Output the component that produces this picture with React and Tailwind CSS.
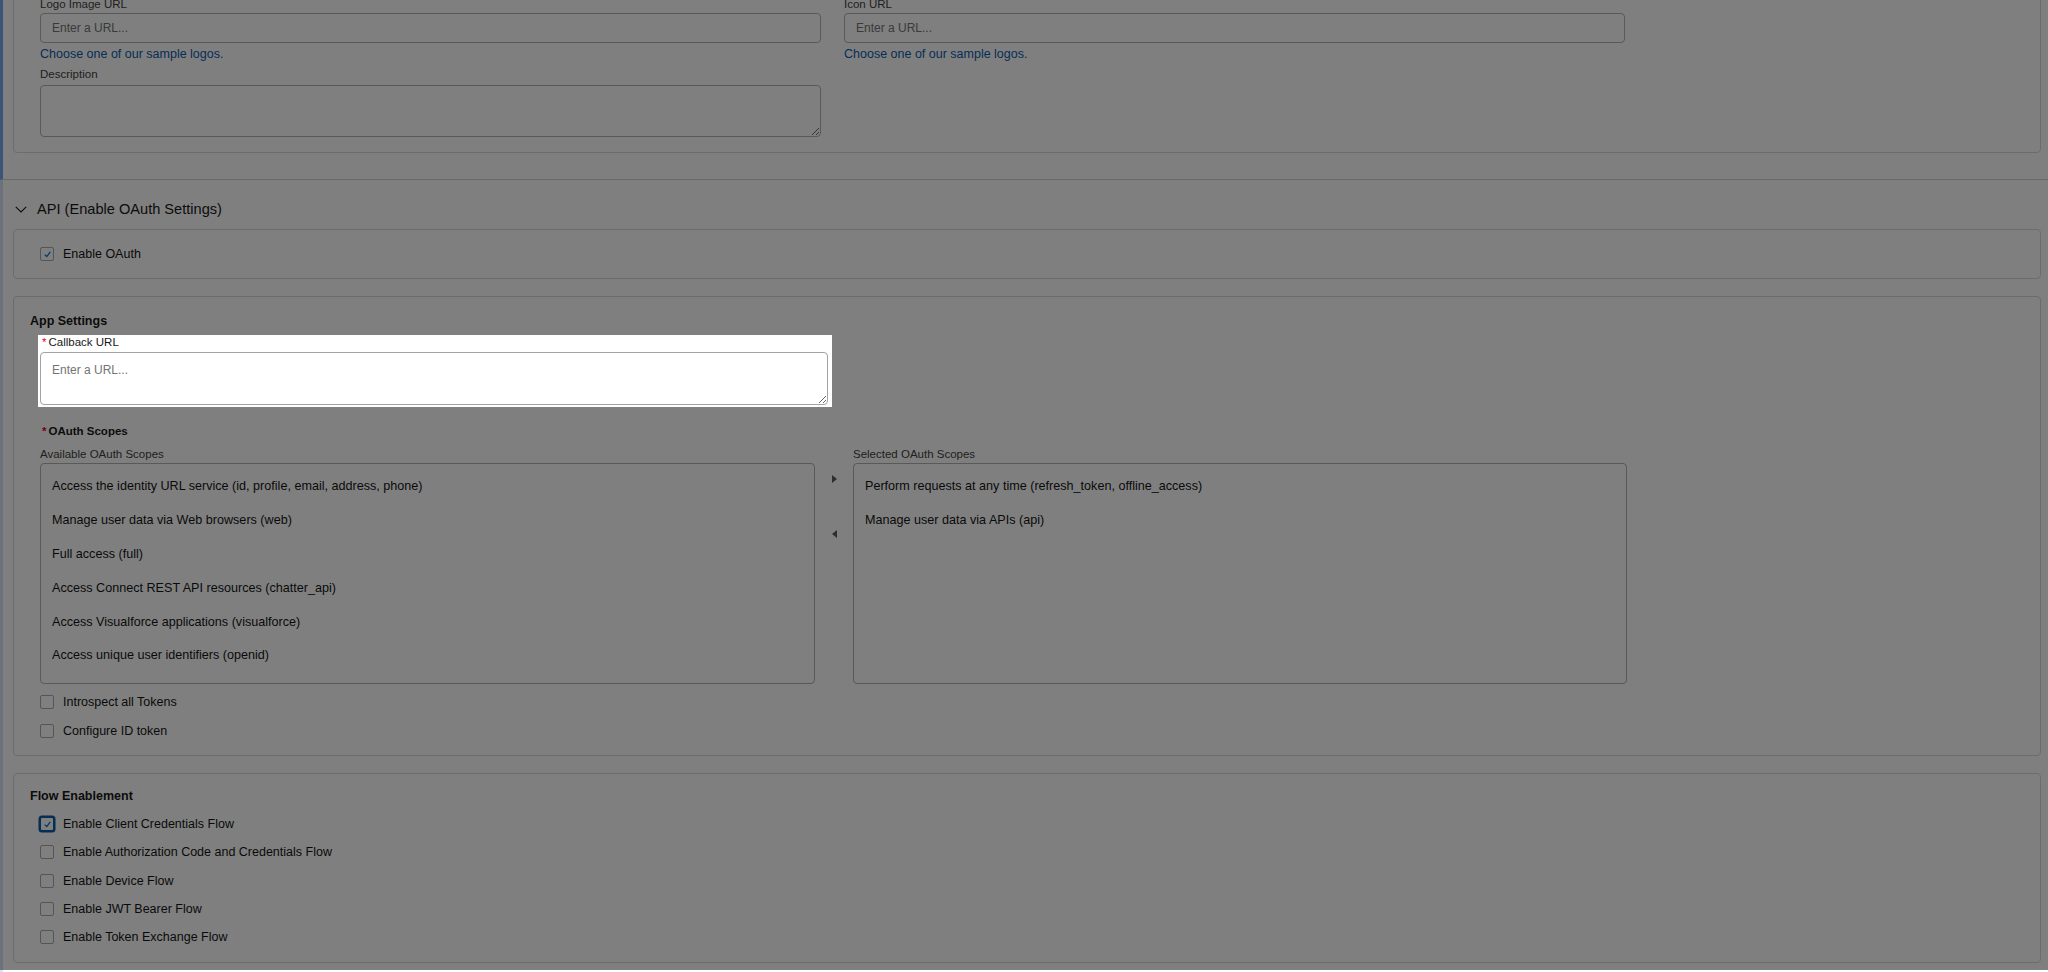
import clsx from 'clsx';

const AVAILABLE_SCOPES = [
  'Access the identity URL service (id, profile, email, address, phone)',
  'Manage user data via Web browsers (web)',
  'Full access (full)',
  'Access Connect REST API resources (chatter_api)',
  'Access Visualforce applications (visualforce)',
  'Access unique user identifiers (openid)',
];

const SELECTED_SCOPES = [
  'Perform requests at any time (refresh_token, offline_access)',
  'Manage user data via APIs (api)',
];

const FLOWS = [
  { label: 'Enable Client Credentials Flow', checked: true, focused: true },
  { label: 'Enable Authorization Code and Credentials Flow' },
  { label: 'Enable Device Flow' },
  { label: 'Enable JWT Bearer Flow' },
  { label: 'Enable Token Exchange Flow' },
];

function Checkbox({ checked, focused }) {
  return (
    <span
      className={clsx(
        'flex h-[14px] w-[14px] shrink-0 items-center justify-center rounded-[2px] border bg-white',
        focused
          ? 'border-[#0b5cab] shadow-[0_0_0_1.5px_#0b5cab]'
          : 'border-[#ababab]'
      )}
    >
      {checked && (
        <svg viewBox="0 0 10 10" className="h-[9px] w-[9px]">
          <path d="M2.3 5.4 L4.2 7.4 L7.8 2.4" fill="none" stroke="#0176d3" strokeWidth="1.4" strokeLinecap="round" strokeLinejoin="round" />
        </svg>
      )}
    </span>
  );
}

function CheckRow({ label, checked, focused }) {
  return (
    <div className="flex h-[16px] items-center gap-[9px]">
      <Checkbox checked={checked} focused={focused} />
      <span className="text-[12.5px] leading-[16px] text-[#141414]">{label}</span>
    </div>
  );
}

function Required() {
  return <abbr className="mx-[2px] text-[11.5px] leading-[14px] text-[#ea001e] no-underline">*</abbr>;
}

function UrlInput() {
  return (
    <input
      type="text"
      placeholder="Enter a URL..."
      className="block h-[30px] w-full rounded-[4px] border border-[#b2b2b2] bg-white pl-[11px] text-[12px] text-[#181818] outline-none placeholder:text-[#747474]"
    />
  );
}

function FieldLabel({ children }) {
  return <div className="h-[14px] text-[11.5px] leading-[14px] text-[#3e3e3c]">{children}</div>;
}

function ScopeList({ label, items, width }) {
  return (
    <div style={{ width }}>
      <FieldLabel>{label}</FieldLabel>
      <div className="mt-[2px] h-[221px] rounded-[4px] border border-[#b2b2b2] pl-[11px] pt-[6px]">
        {items.map((item) => (
          <div key={item} className="flex h-[33.8px] items-center text-[12.6px] text-[#141414]">
            {item}
          </div>
        ))}
      </div>
    </div>
  );
}

export default function App() {
  return (
    <div className="relative flex h-[972px] w-[2048px] flex-col overflow-hidden bg-white font-['Liberation_Sans',Arial,sans-serif] text-[#181818]">
      {/* branding section, scrolled partly out of view */}
      <section className="h-[180px] shrink-0 border-b border-l-[3px] border-b-[#d2d2d2] border-l-[#76a9ee]">
        <div className="ml-[10px] mr-[7px] -mt-[14px] rounded-[4px] border border-[#d8d8d8] pb-[15px] pl-[26px] pt-[10px]">
          <div className="grid grid-cols-[781px_781px] gap-x-[23px]">
            <div>
              <FieldLabel>Logo Image URL</FieldLabel>
              <div className="mt-[2px]">
                <UrlInput />
              </div>
              <div className="mt-[3px] text-[12.5px] leading-[16px] text-[#0b5cab]">Choose one of our sample logos.</div>
              <div className="mt-[5px]">
                <FieldLabel>Description</FieldLabel>
              </div>
              <textarea className="mt-[4px] block h-[52px] w-full rounded-[4px] border border-[#b2b2b2] bg-white outline-none" />
            </div>
            <div>
              <FieldLabel>Icon URL</FieldLabel>
              <div className="mt-[2px]">
                <UrlInput />
              </div>
              <div className="mt-[3px] text-[12.5px] leading-[16px] text-[#0b5cab]">Choose one of our sample logos.</div>
            </div>
          </div>
        </div>
      </section>

      <section className="flex-1 border-l-[3px] border-l-[#d9e4f7]">
        <div className="ml-[12px] mt-[19px] flex h-[20px] items-center gap-[10px]">
          <svg viewBox="0 0 12 7" className="h-[7px] w-[12px]">
            <path d="M0.8 0.8 L6 6 L11.2 0.8" fill="none" stroke="#181818" strokeWidth="1.1" />
          </svg>
          <h2 className="text-[14.6px] leading-[20px]">API (Enable OAuth Settings)</h2>
        </div>

        <div className="ml-[10px] mr-[7px] mt-[10px] rounded-[4px] border border-[#d8d8d8] pb-[16px] pl-[26px] pt-[16px]">
          <CheckRow label="Enable OAuth" checked />
        </div>

        <div className="ml-[10px] mr-[7px] mt-[17px] rounded-[4px] border border-[#d8d8d8] pb-[16px] pl-[16px] pt-[16px]">
          <h3 className="text-[12.5px] font-bold leading-[16px]">App Settings</h3>

          <div className="relative z-20 ml-[8px] mt-[6px] w-[794px] bg-white pb-[2px] pl-[2px] pr-[4px]">
            <div className="flex h-[14px] items-center text-[11.5px] leading-[14px] text-[#181818]">
              <Required />
              Callback URL
            </div>
            <textarea
              placeholder="Enter a URL..."
              className="mt-[3px] block h-[53px] w-full rounded-[4px] border border-[#a3a3a3] bg-white px-[11px] pt-[9px] text-[12px] leading-[16px] outline-none placeholder:text-[#747474]"
            />
          </div>

          <div className="ml-[10px] mt-[17px] flex h-[14px] items-center text-[11.5px] font-bold leading-[14px]">
            <Required />
            OAuth Scopes
          </div>

          <div className="ml-[10px] mt-[9px] flex">
            <ScopeList label="Available OAuth Scopes" items={AVAILABLE_SCOPES} width={775} />
            <div className="flex w-[38px] flex-col items-center pt-[28px]">
              <svg viewBox="0 0 5 8" className="h-[8px] w-[5px]">
                <path d="M0 0 L5 4 L0 8 Z" fill="#5c5c5c" />
              </svg>
              <svg viewBox="0 0 5 8" className="mt-[47px] h-[8px] w-[5px]">
                <path d="M5 0 L0 4 L5 8 Z" fill="#5c5c5c" />
              </svg>
            </div>
            <ScopeList label="Selected OAuth Scopes" items={SELECTED_SCOPES} width={774} />
          </div>

          <div className="ml-[10px] mt-[10px]">
            <CheckRow label="Introspect all Tokens" />
          </div>
          <div className="ml-[10px] mt-[13px]">
            <CheckRow label="Configure ID token" />
          </div>
        </div>

        <div className="ml-[10px] mr-[7px] mt-[17px] rounded-[4px] border border-[#d8d8d8] pb-[17px] pl-[16px] pt-[14px]">
          <h3 className="text-[12.5px] font-bold leading-[16px]">Flow Enablement</h3>
          <div className="ml-[10px] mt-[12px] flex flex-col gap-[12.25px]">
            {FLOWS.map((flow) => (
              <CheckRow key={flow.label} {...flow} />
            ))}
          </div>
        </div>
      </section>

      {/* walkthrough overlay dimming everything except the callback field */}
      <div className="pointer-events-none absolute inset-x-0 top-0 bottom-[2px] z-10 bg-black/50" />
    </div>
  );
}
